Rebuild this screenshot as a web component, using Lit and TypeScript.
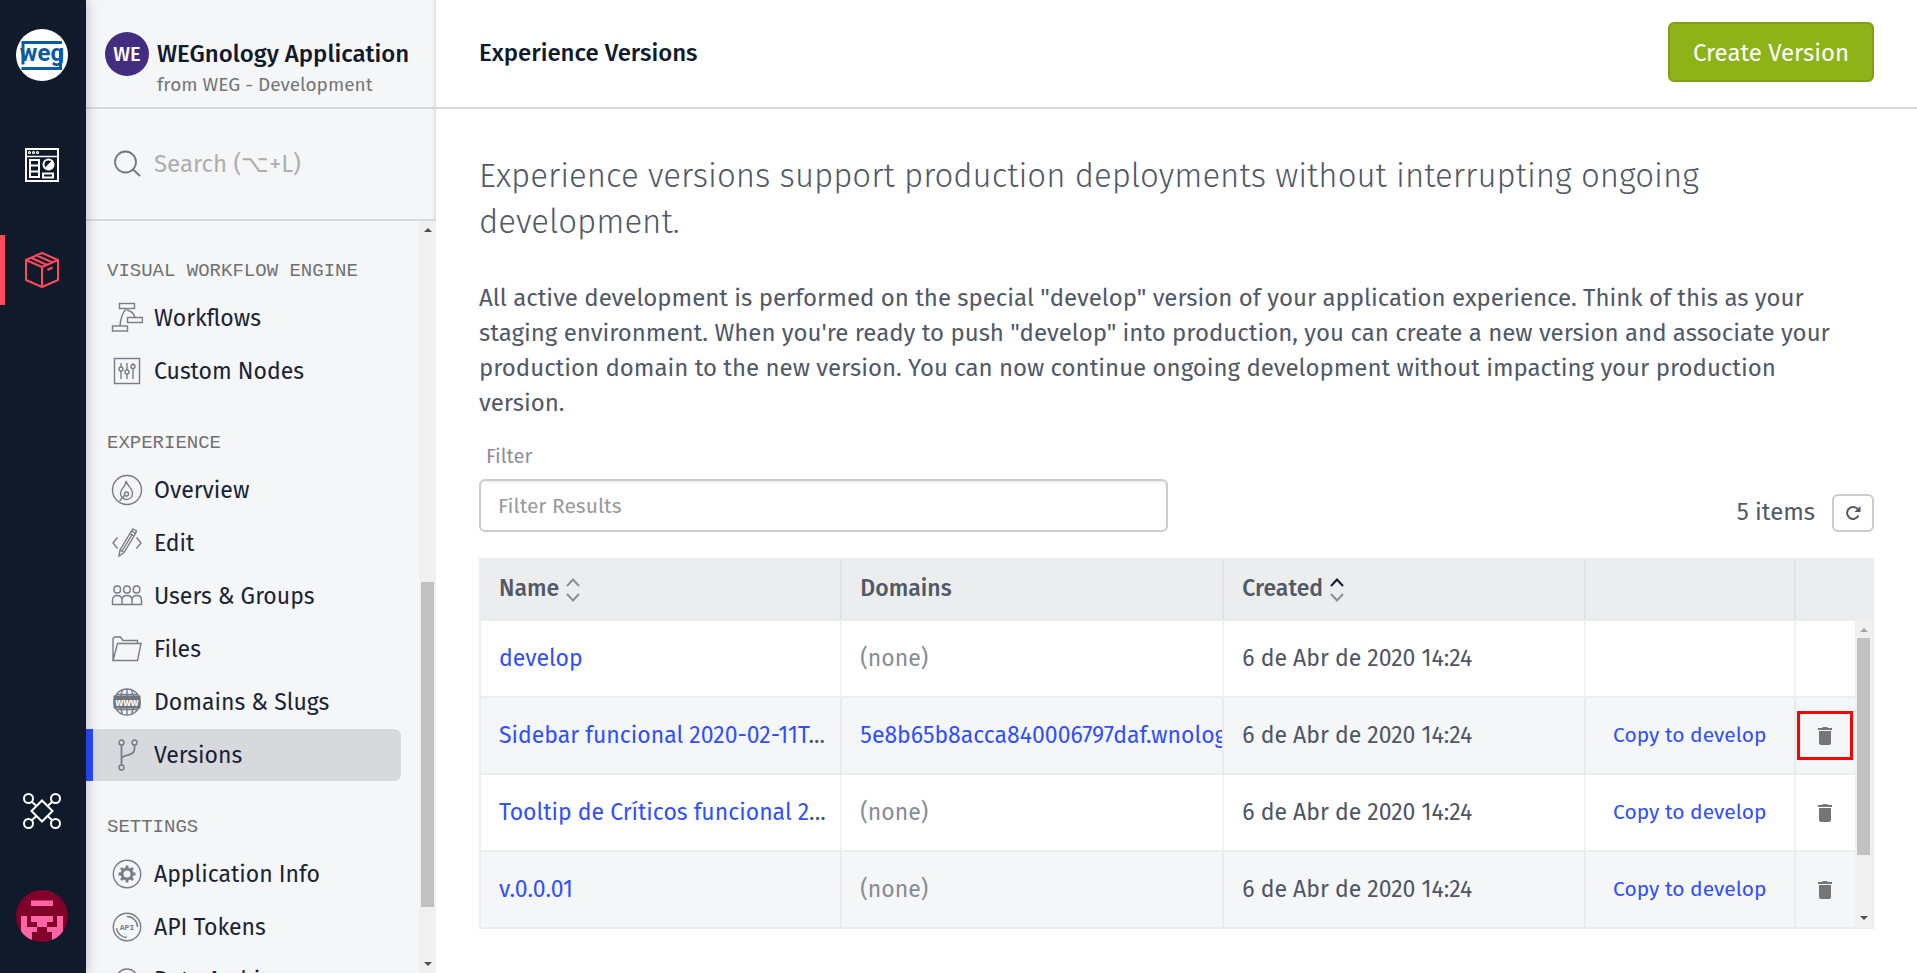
import { LitElement, html, css, svg, nothing } from "lit";
import { customElement, property } from "lit/decorators.js";
import { classMap } from "lit/directives/class-map.js";

const icons: Record<string, unknown> = {
  workflows: svg`<rect x="8.5" y="1.5" width="15" height="5"/><rect x="16.5" y="15.500" width="15" height="5"/><rect x="1.5" y="24" width="15" height="5"/><path d="M15 7C10.500 12 9.500 17 9 24M16 8c4 1 7 4 8 7.500"/>`,
  nodes: svg`<rect x="3.500" y="3.500" width="25" height="25"/><path d="M10 8v4m0 4v8M16 8v7m0 4v5M22 8v1.500m0 4V24"/><circle cx="10" cy="14" r="2"/><circle cx="16" cy="17" r="2"/><circle cx="22" cy="11.500" r="2"/>`,
  overview: svg`<circle cx="16" cy="16" r="14.500"/><path d="M15 7c1 5 7 7 6.500 13-.4 3.500-3.200 5.500-6 5.500S9.500 23 9.500 19.500C9.500 14 15.500 12 15 7zM8.500 27l5.500-6"/><circle cx="15.500" cy="20" r="2"/>`,
  edit: svg`<path d="M6.500 10.500 2 16l4.500 5.500M25.500 10.500 30 16l-4.500 5.500M8 29l1-6L20.500 4l4 2.500L13 25.500zM9 23l4 2.500M19 6.500 23 9M20.500 4 22 2l3.500 2-1 2.500M11 24 21.500 7"/>`,
  users: svg`<rect x="3" y="6" width="6.500" height="7" rx="3"/><rect x="12.700" y="6" width="6.500" height="7" rx="3"/><rect x="22.300" y="6" width="6.500" height="7" rx="3"/><path d="M1.500 24.500v-4.500c0-3 2-4.500 4.700-4.500s4.800 1.500 4.800 4.500c0-3 2-4.500 5-4.500s5 1.500 5 4.500c0-3 2-4.500 4.800-4.500s4.700 1.500 4.700 4.500v4.500zM11 20v4.500M21 20v4.500"/>`,
  files: svg`<path d="M2 27.500V5.500L3.500 4h6L12 7.500h14.500V10.500M2 27.500 6.500 10.500h23.500L26.500 27.500z"/>`,
  domains: svg`<circle cx="16" cy="16" r="13"/><path d="M16 3v26M11.500 4C8.500 11 8.500 21 11.500 28M20.500 4c3 7 3 17 0 24M5.500 8.500h21M5.500 23.500h21"/><rect class="fill" x="2.500" y="9.500" width="27" height="13"/><text class="knock" x="16" y="20" text-anchor="middle">WWW</text>`,
  versions: svg`<circle cx="10.500" cy="3.500" r="2.500"/><circle cx="23.500" cy="3.500" r="2.500"/><circle cx="10.500" cy="28.500" r="2.500"/><path stroke-width="1.800" d="M10.500 6v20M23.500 6v4c0 8-13 5-13 10"/>`,
  info: svg`<circle cx="16" cy="16" r="13.700"/><circle cx="16" cy="16" r="5" stroke-width="3"/><path stroke-width="2.800" d="M16 7.500v3M16 21.500v3M7.500 16h3M21.500 16h3M10 10l2 2M20 20l2 2M22 10l-2 2M12 20l-2 2"/>`,
  api: svg`<circle cx="16" cy="16" r="13.700"/><path d="M16 5.500A10.500 10.500 0 0 1 26.500 16M5.500 17A10.500 10.500 0 0 0 16 26.500"/><text class="tiny" x="16" y="18.500" text-anchor="middle">API</text>`,
  archive: svg`<circle cx="16" cy="16" r="11"/>`,
};

@customElement("nav-icon")
class NavIcon extends LitElement {
  static styles = css`
    :host { display: block; width: 32px; height: 32px; flex: none; }
    svg { display: block; fill: none; stroke: #767d88; stroke-width: 1.4; }
    .fill { fill: #6f7681; stroke: none; }
    text { stroke: none; font-family: "Fira Sans", "Noto Sans", sans-serif; font-weight: 700; }
    .knock { fill: #fff; font-size: 9px; }
    .tiny { fill: #767d88; font-size: 8px; font-family: "Liberation Mono", monospace; }
  `;
  @property() name = "";
  render() {
    return html`<svg width="32" height="32" viewBox="0 0 32 32" aria-hidden="true">${icons[this.name]}</svg>`;
  }
}

@customElement("scroll-track")
class ScrollTrack extends LitElement {
  static styles = css`
    :host { display: flex; flex-direction: column; align-items: center; width: 17px; flex: none; background: #f0f0f1; }
    .arrow { width: 0; height: 0; border: 4px solid transparent; margin: 3px 0 6px; border-top-width: 0; }
    .up { border-bottom-color: #505050; margin: 7px 0 6px; }
    .up.dim { border-bottom-color: #a3a3a3; }
    .down { border-top: 4px solid #505050; border-bottom-width: 0; margin: 6px 0 7px; }
    .lane { flex: 1; width: 13px; display: flex; flex-direction: column; }
    .thumb { background: #c1c1c1; }
  `;
  @property({ type: Number }) before = 0;
  @property({ type: Number }) size = 1;
  @property({ type: Number }) after = 0;
  render() {
    return html`
      <span class="arrow up ${classMap({ dim: this.before === 0 })}"></span>
      <div class="lane">
        <div style="flex:${this.before}"></div>
        <div class="thumb" style="flex:${this.size}"></div>
        <div style="flex:${this.after}"></div>
      </div>
      <span class="arrow down"></span>
    `;
  }
}

@customElement("app-rail")
class AppRail extends LitElement {
  static styles = css`
    :host { display: flex; flex-direction: column; align-items: center; width: 86px; flex: none; box-sizing: border-box;
      padding: 29px 0 31px; background: #111a2a; box-shadow: 0 0 12px rgba(17, 26, 42, 0.3); z-index: 1; }
    a { display: flex; align-items: center; justify-content: center; width: 100%; box-sizing: border-box; height: 70px; padding-right: 2px; margin-bottom: 35px; }
    a.round { height: 52px; margin: 0; }
    a.logo { margin-bottom: 49px; }
    a.active { border-left: 5px solid #ff495c; padding-right: 7px; }
    a.graph { margin: auto 0 44px; }
    svg { display: block; fill: none; }
    text { font-family: "Roboto", sans-serif; font-weight: 700; font-size: 24px; }
  `;
  render() {
    return html`
      <a href="#home" class="round logo" aria-label="WEG home">
        <svg width="52" height="52" viewBox="0 0 52 52">
          <circle cx="26" cy="26" r="26" fill="#fff"/>
          <path d="M46 13.500H7v22M5.500 39.500H44.500V20" stroke="#0b5ca6" stroke-width="3"/>
          <text x="26" y="32" text-anchor="middle" fill="#0b5ca6">weg</text>
        </svg>
      </a>
      <a href="#dashboards" aria-label="Dashboards">
        <svg width="34" height="34" viewBox="0 0 34 34" stroke="#fff" stroke-width="2">
          <rect x="1" y="1" width="32" height="32"/><path d="M1 8.500h32" stroke-width="1.500"/>
          <g stroke-width="1.200"><circle cx="4.500" cy="4.500" r="1"/><circle cx="8.500" cy="4.500" r="1"/><circle cx="12.500" cy="4.500" r="1"/></g>
          <path d="M5 12h9v17H5zM5 17.500h9M5 23.500h9M18 25.500h10v4H18z"/>
          <circle cx="23.500" cy="16.500" r="5"/><path d="M20 20l7-7a5 5 0 0 1-7 7z" fill="#fff" stroke-width="1"/>
        </svg>
      </a>
      <a href="#applications" class="active" aria-label="Applications">
        <svg width="34" height="36" viewBox="0 0 34 36" stroke="#ff495c" stroke-width="2" stroke-linejoin="round">
          <path d="M17 1 33 8v20l-16 7L1 28V8zM1 8l16 7 16-7M17 15v20M6.500 6l15.500 7M12 3.500 27.500 10.500M22.500 18l5-2.500"/>
        </svg>
      </a>
      <a href="#sandbox" class="graph" aria-label="Sandbox">
        <svg width="38" height="36" viewBox="0 0 38 36" stroke="#fff" stroke-width="2">
          <circle cx="5.500" cy="5.500" r="4.500"/><circle cx="32.500" cy="5.500" r="4.500"/><circle cx="5.500" cy="30.500" r="4.500"/><circle cx="32.500" cy="30.500" r="4.500"/>
          <path d="M19 7.500 29.500 18 19 28.500 8.500 18zM9 9l4.500 4M29 9l-4.500 4M9 27l4.500-4M29 27l-4.500-4"/>
        </svg>
      </a>
      <a href="#account" class="round" aria-label="Account">
        <svg width="52" height="52" viewBox="0 0 52 52">
          <clipPath id="disc"><circle cx="26" cy="26" r="26"/></clipPath>
          <g clip-path="url(#disc)">
            <rect width="52" height="52" fill="#800228"/>
            <path fill="#ff64a4" d="M15 10.500h22v5.500H15zM5 26h6v11h10v5h-5v10H5zM15 26h22v6h-6v5H21v-5h-6zM41 26h6v26H36V42h-5v-5h10z"/>
          </g>
        </svg>
      </a>
    `;
  }
}

const sections = [
  { title: "VISUAL WORKFLOW ENGINE", items: [["workflows", "Workflows"], ["nodes", "Custom Nodes"]] },
  { title: "EXPERIENCE", items: [["overview", "Overview"], ["edit", "Edit"], ["users", "Users & Groups"], ["files", "Files"], ["domains", "Domains & Slugs"], ["versions", "Versions"]] },
  { title: "SETTINGS", items: [["info", "Application Info"], ["api", "API Tokens"], ["archive", "Data Archive"]] },
];

@customElement("app-sidebar")
class AppSidebar extends LitElement {
  static styles = css`
    :host { display: flex; flex-direction: column; width: 350px; flex: none; background: #f5f6f8; color: #1a2335; box-shadow: inset -3px 0 3px -1px rgba(17, 26, 42, 0.1); }
    header { display: flex; gap: 8px; height: 109px; box-sizing: border-box; padding: 32px 0 0 19px; border-bottom: 2px solid #d8d9dd; white-space: nowrap; flex: none; }
    .avatar { display: grid; place-items: center; width: 44px; height: 44px; border-radius: 50%; background: #432d80; color: #fff; font-size: 20px; font-weight: 500; flex: none; }
    h1 { margin: 5px 0 0; font-size: 24px; font-weight: 500; line-height: 34px; color: #111a2a; }
    .from { margin: 0; font-size: 19px; line-height: 28px; color: #747576; }
    .search { display: flex; align-items: center; gap: 11px; height: 112px; box-sizing: border-box; padding-left: 25px; border-bottom: 2px solid #d8d9dd; flex: none; }
    .search svg { flex: none; }
    input { flex: 1; min-width: 0; border: 0; padding: 0; background: none; font: inherit; font-size: 24px; line-height: 32px; outline: none; }
    input::placeholder { color: #adaeaf; opacity: 1; }
    .body { flex: 1; min-height: 0; display: flex; }
    nav { flex: 1; min-width: 0; overflow: hidden; padding: 4px 18px 0 0; }
    h2 { margin: 34px 0 9px 21px; font: 19px/24px "Liberation Mono", monospace; color: #707071; }
    ul { list-style: none; margin: 0; padding: 0; display: grid; gap: 1px; }
    a { display: flex; align-items: center; gap: 11px; height: 52px; padding-left: 25px; box-sizing: border-box; color: inherit; text-decoration: none; font-size: 23px; white-space: nowrap; }
    a.active { background: #d8d9dd; border-left: 7px solid #2949f8; padding-left: 18px; border-radius: 0 7px 7px 0; }
  `;
  render() {
    return html`
      <header>
        <span class="avatar">WE</span>
        <div><h1>WEGnology Application</h1><p class="from">from WEG - Development</p></div>
      </header>
      <div class="search">
        <svg width="32" height="32" viewBox="0 0 32 32" fill="none" stroke="#6f7884" stroke-width="1.800" aria-hidden="true"><circle cx="14.500" cy="14" r="10.500"/><path d="m22 21.500 7 6.500"/></svg>
        <input type="search" aria-label="Search" placeholder="Search (⌥+L)" />
      </div>
      <div class="body">
        <nav aria-label="Application">
          ${sections.map((s) => html`
            <h2>${s.title}</h2>
            <ul>
              ${s.items.map(([icon, label]) => html`<li>
                <a href="#${icon}" class=${classMap({ active: icon === "versions" })}><nav-icon name=${icon}></nav-icon>${label}</a>
              </li>`)}
            </ul>`)}
        </nav>
        <scroll-track .before=${344} .size=${325} .after=${49}></scroll-track>
      </div>
    `;
  }
}

interface Version { name: string; cut?: boolean; domain?: string; marked?: boolean; locked?: boolean; }
const created = "6 de Abr de 2020 14:24";
const versions: Version[] = [
  { name: "develop", locked: true },
  { name: "Sidebar funcional 2020-02-11T", cut: true, domain: "5e8b65b8acca840006797daf.wnolog", marked: true },
  { name: "Tooltip de Críticos funcional 2", cut: true },
  { name: "v.0.0.01" },
];

@customElement("version-table")
class VersionTable extends LitElement {
  static styles = css`
    :host { display: flex; border: 2px solid #ebedee; border-width: 0 2px; }
    table { flex: 1; width: 100%; min-width: 0; border-collapse: separate; border-spacing: 0; table-layout: fixed; }
    .wide { width: 26.3%; }
    .wider { width: 27.8%; }
    .copy { width: 15.3%; }
    th, td { box-sizing: border-box; padding: 0 0 0 18px; text-align: left; white-space: nowrap; overflow: hidden; font-size: 23px; }
    th { height: 63px; padding-bottom: 4px; font-weight: 500; color: #515867;
      background: #ebedee linear-gradient(#e0e1e4, #e0e1e4) right 2px / 2px 59px no-repeat; }
    th:last-child { background-image: none; }
    td { height: 77px; padding-bottom: 2px; border-bottom: 2px solid #ebedee; border-right: 2px solid #f1f2f4; color: #4e5564; }
    tr:nth-child(even) td { background: #f5f6f8; border-right-color: #eaebee; }
    tbody td:last-child { border-right: 0; }
    td.center { padding: 0; text-align: center; font-size: 21px; }
    .none { color: #878c95; }
    a { color: #304ffe; text-decoration: none; }
    button { font: inherit; color: inherit; background: none; border: 0; padding: 0; }
    .sort { display: flex; align-items: center; gap: 7px; }
    .sort svg { margin-top: 4px; }
    .link { color: #304ffe; padding-bottom: 2px; }
    .trash { display: inline-grid; place-items: center; width: 56px; height: 49px; border: 3px solid transparent; vertical-align: middle; }
    .trash.marked { border-color: #ff0000; }
    .side { display: flex; flex-direction: column; }
    .corner { height: 63px; background: #ebedee; }
    scroll-track { flex: 1; border-bottom: 2px solid #ebedee; }
  `;
  sort(label: string, up: string) {
    return html`<button class="sort">${label}<svg width="14" height="24" viewBox="0 0 14 24" fill="none" stroke-width="2" aria-hidden="true"><path d="m1 8 6-6.500L13 8" stroke=${up}/><path d="m1 16 6 6.500 6-6.500" stroke="#8c8f98"/></svg></button>`;
  }
  render() {
    return html`
      <table>
        <colgroup><col class="wide" /><col class="wider" /><col class="wide" /><col class="copy" /><col /></colgroup>
        <thead>
          <tr>
            <th scope="col">${this.sort("Name", "#8c8f98")}</th>
            <th scope="col">Domains</th>
            <th scope="col">${this.sort("Created", "#111a2a")}</th>
            <th aria-label="Copy"></th>
            <th aria-label="Delete"></th>
          </tr>
        </thead>
        <tbody>
          ${versions.map((v) => html`<tr>
            <td><a href="#version">${v.name}</a>${v.cut ? "..." : nothing}</td>
            <td>${v.domain ? html`<a href="#domain">${v.domain}</a>` : html`<span class="none">(none)</span>`}</td>
            <td>${created}</td>
            <td class="center">${v.locked ? nothing : html`<button class="link">Copy to develop</button>`}</td>
            <td class="center">${v.locked ? nothing : html`<button class="trash ${classMap({ marked: !!v.marked })}" aria-label="Delete version">
              <svg width="14" height="18" viewBox="0 0 14 18" fill="#757575"><path d="M1 4h12v12a2 2 0 0 1-2 2H3a2 2 0 0 1-2-2zM0 1h4l1-1h4l1 1h4v2H0z"/></svg></button>`}</td>
          </tr>`)}
        </tbody>
      </table>
      <div class="side">
        <div class="corner"></div>
        <scroll-track .before=${0} .size=${217} .after=${55}></scroll-track>
      </div>
    `;
  }
}

@customElement("app-root")
class AppRoot extends LitElement {
  static styles = css`
    :host { display: flex; height: 100vh; overflow: hidden; background: #fff; font-family: "Fira Sans", "Noto Sans", sans-serif; color: #515867; }
    main { flex: 1; min-width: 0; }
    header { display: flex; align-items: center; justify-content: space-between; height: 109px; box-sizing: border-box; padding: 0 43px 3px; border-bottom: 2px solid #d8d9dd; }
    h1 { margin: 2px 0 0; font-size: 24px; font-weight: 500; line-height: 34px; color: #111a2a; }
    .create { height: 60px; padding: 2px 23px 0; border: 2px solid #7fa114; border-radius: 6px; background: #8db319; color: #fff; font: inherit; font-size: 24px; }
    .content { padding: 43px 43px 0; }
    .lead { margin: 0 0 36px; padding-top: 1px; font-size: 33px; line-height: 46px; font-weight: 300; }
    .about { margin: 0 0 21px; padding-right: 16px; font-size: 24px; line-height: 35px; }
    .tools { display: grid; grid-template-columns: 1fr 1fr; gap: 17px; align-items: end; margin-bottom: 26px; }
    label { display: block; padding-left: 7px; margin-bottom: 9px; font-size: 20px; line-height: 28px; color: #8a8e96; }
    input { display: block; width: 100%; height: 53px; box-sizing: border-box; padding: 0 17px; border: 2px solid #cbcccc; border-radius: 6px; box-shadow: inset 0 2px 2px rgba(0, 0, 0, 0.06); font: inherit; font-size: 21px; outline: none; }
    input::placeholder { color: #999; opacity: 1; }
    .count { display: flex; justify-content: flex-end; align-items: center; gap: 17px; font-size: 24px; line-height: 34px; }
    .count span { padding-bottom: 3px; }
    .refresh { display: grid; place-items: center; width: 42px; height: 38px; padding: 0; border: 2px solid #cbcccc; border-radius: 6px; background: #fff; }
  `;
  render() {
    return html`
      <app-rail></app-rail>
      <app-sidebar></app-sidebar>
      <main>
        <header>
          <h1>Experience Versions</h1>
          <button class="create">Create Version</button>
        </header>
        <div class="content">
          <p class="lead">Experience versions support production deployments without interrupting ongoing development.</p>
          <p class="about">All active development is performed on the special "develop" version of your application experience. Think of this as your staging environment. When you're ready to push "develop" into production, you can create a new version and associate your production domain to the new version. You can now continue ongoing development without impacting your production version.</p>
          <div class="tools">
            <div>
              <label for="filter">Filter</label>
              <input id="filter" type="text" placeholder="Filter Results" />
            </div>
            <div class="count">
              <span>5 items</span>
              <button class="refresh" aria-label="Refresh">
                <svg width="16" height="16" viewBox="0 0 16 16" fill="none" stroke="#515867" stroke-width="2"><path d="M13.500 10.500A6 6 0 1 1 13 4.500"/><path d="M15.500 1v6H9.500z" fill="#515867" stroke="none"/></svg>
              </button>
            </div>
          </div>
          <version-table></version-table>
        </div>
      </main>
    `;
  }
}
